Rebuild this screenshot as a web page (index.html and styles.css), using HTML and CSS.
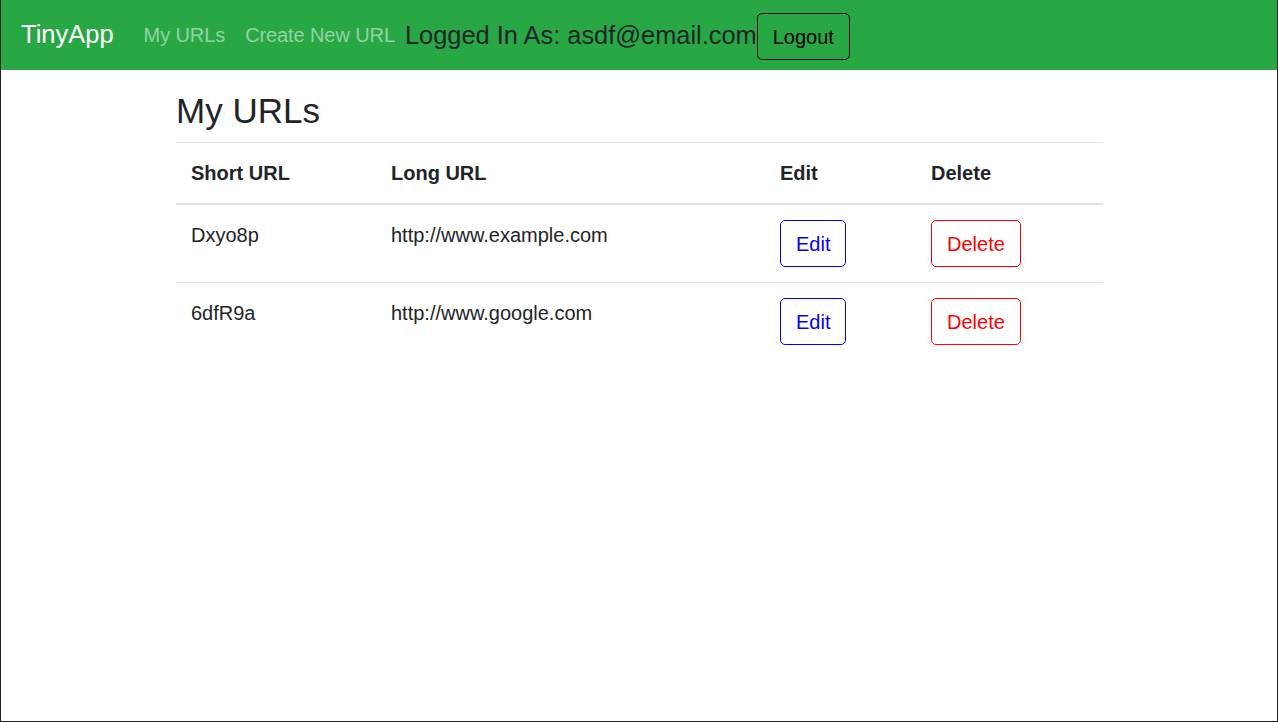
FILE: index.html
```html
<!DOCTYPE html>
<html lang="en">
<head>
<meta charset="utf-8">
<title>TinyApp</title>
<link rel="stylesheet" href="styles.css">
</head>
<body>
<div class="frame">
  <nav class="navbar">
    <a class="brand" href="#">TinyApp</a>
    <a class="nav-link" href="#">My URLs</a>
    <a class="nav-link" href="#">Create New URL</a>
    <h5 class="user">Logged In As: asdf@email.com</h5>
    <button class="btn btn-logout" type="button">Logout</button>
  </nav>
  <main class="container">
    <h3 class="title">My URLs</h3>
    <table class="table">
      <colgroup>
        <col class="c1"><col class="c2"><col class="c3"><col class="c4">
      </colgroup>
      <thead>
        <tr><th>Short URL</th><th>Long URL</th><th>Edit</th><th>Delete</th></tr>
      </thead>
      <tbody>
        <tr>
          <td>Dxyo8p</td>
          <td>http://www.example.com</td>
          <td><button class="btn btn-edit" type="button">Edit</button></td>
          <td><button class="btn btn-delete" type="button">Delete</button></td>
        </tr>
        <tr>
          <td>6dfR9a</td>
          <td>http://www.google.com</td>
          <td><button class="btn btn-edit" type="button">Edit</button></td>
          <td><button class="btn btn-delete" type="button">Delete</button></td>
        </tr>
      </tbody>
    </table>
  </main>
</div>
</body>
</html>
```
FILE: styles.css
```css
* { box-sizing: border-box; }
html, body { margin: 0; padding: 0; }
body {
  font-family: "Liberation Sans", Arial, sans-serif;
  font-size: 20px;
  line-height: 1.5;
  color: #212529;
  background: #fff;
}
.frame {
  height: 722px;
  border-left: 1px solid #222;
  border-right: 1px solid #222;
  border-bottom: 1px solid #222;
}
.navbar {
  display: flex;
  align-items: center;
  height: 70px;
  padding: 10px 20px;
  background: #28a745;
}
.brand {
  font-size: 25.5px;
  line-height: 37.5px;
  padding: 6.25px 0;
  margin-right: 20px;
  color: #fff;
  text-decoration: none;
}
.nav-link {
  padding: 10px;
  line-height: 30px;
  letter-spacing: -0.1px;
  color: rgba(255,255,255,.5);
  text-decoration: none;
}
.user {
  margin: 0;
  font-size: 25.4px;
  font-weight: 400;
  line-height: 30px;
  color: #212529;
}
.btn {
  font-family: inherit;
  font-size: 20px;
  line-height: 30px;
  padding: 7.5px 15px;
  border: 1px solid;
  border-radius: 5px;
  background: transparent;
  cursor: pointer;
}
.btn-logout {
  align-self: flex-end;
  color: #000;
  border-color: #000;
}
.btn-edit { color: #00f; border-color: #00f; }
.btn-delete { color: #f00; border-color: #f00; }
.container {
  width: 928px;
  margin: 0 auto;
  padding: 20px 0 0 1px;
}
.title {
  margin: 0 0 10px;
  font-size: 35px;
  font-weight: 400;
  line-height: 1.2;
}
.table {
  width: 100%;
  border-collapse: collapse;
}
.c1 { width: 200px; }
.c2 { width: 389px; }
.c3 { width: 151px; }
.c4 { width: 187px; }
.table th, .table td {
  padding: 15px;
  text-align: left;
  vertical-align: top;
  border-top: 1px solid #dee2e6;
}
.table th {
  font-weight: 700;
  border-bottom: 2px solid #dee2e6;
}
.table td .btn { display: block; }
```
